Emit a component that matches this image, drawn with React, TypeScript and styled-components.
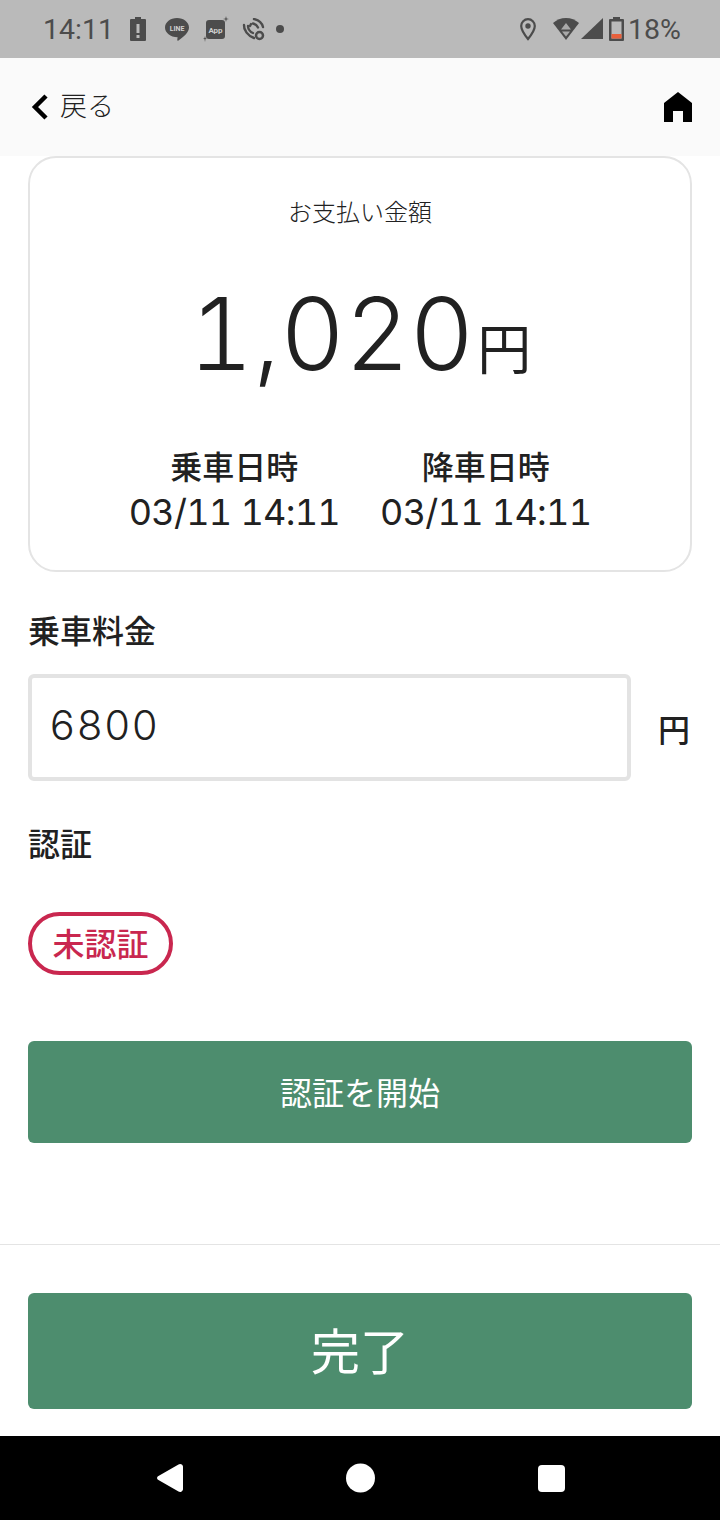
import styled, { createGlobalStyle } from 'styled-components'

const GlobalStyle = createGlobalStyle`
html, body {
    margin: 0;
    padding: 0;
    background: #fff;
}
body {
    font-family: Inter, "Noto Sans CJK JP", sans-serif;
    font-variant-numeric: tabular-nums;
    color: #212121;
}
* {
    box-sizing: border-box;
}
`

const Screen = styled.div`
width: 720px;
height: 1520px;
display: flex;
flex-direction: column;
overflow: hidden;
`

const StatusBar = styled.div`
height: 58px;
flex: none;
background: #bababa;
display: flex;
align-items: center;
justify-content: space-between;
padding: 0 39px 0 43px;
color: #4c4c4c;
font-family: Roboto, sans-serif;
font-size: 28.500px;
`

const StatusGroup = styled.div`
display: flex;
align-items: center;
`

const StatusIcon = styled.svg<{ $left?: number }>`
display: block;
margin-left: ${p => p.$left ?? 0}px;
flex: none;
`

const BatteryText = styled.span`
margin-left: 4px;
`

const Header = styled.header`
height: 98px;
flex: none;
background: #fafafa;
display: flex;
align-items: center;
justify-content: space-between;
padding: 0 28px 0 30px;
`

const BackLink = styled.div`
display: flex;
align-items: center;
gap: 10px;
font-size: 27px;
font-weight: 300;
line-height: 40px;
color: #212121;
`

const Content = styled.main`
flex: 1;
padding: 0 28px;
display: flex;
flex-direction: column;
`

const AmountCard = styled.section`
height: 416px;
border: 2px solid #e4e4e4;
border-radius: 28px;
display: flex;
flex-direction: column;
align-items: center;
`

const CardTitle = styled.div`
margin-top: 37px;
font-size: 24px;
font-weight: 300;
line-height: 36px;
`

const Amount = styled.div`
margin-top: 48px;
height: 110px;
display: flex;
align-items: flex-end;
font-weight: 360;
`

const AmountValue = styled.span`
font-size: 100px;
line-height: 110px;
`

const AmountUnit = styled.span`
font-size: 54px;
font-weight: 400;
line-height: 76px;
margin-left: 3px;
`

const TimeRow = styled.div`
margin-top: 57px;
display: flex;
gap: 40px;
`

const TimeColumn = styled.div`
display: flex;
flex-direction: column;
align-items: center;
`

const TimeLabel = styled.div`
font-size: 32px;
line-height: 44px;
font-weight: 500;
`

const TimeValue = styled.div`
font-size: 36px;
line-height: 45px;
letter-spacing: -0.700px;
`

const SectionLabel = styled.div<{ $top: number }>`
margin-top: ${p => p.$top}px;
font-size: 32px;
line-height: 44px;
font-weight: 500;
`

const FareRow = styled.div`
margin-top: 20px;
display: flex;
align-items: center;
justify-content: space-between;
`

const FareInput = styled.div`
width: 603px;
height: 107px;
border: 4px solid #e3e3e3;
border-radius: 6px;
padding: 0 0 6px 17px;
display: flex;
align-items: center;
font-size: 41px;
font-weight: 350;
letter-spacing: 1px;
`

const FareUnit = styled.div`
font-size: 32px;
font-weight: 500;
line-height: 44px;
padding-top: 6px;
margin-right: 2px;
`

const StatusPill = styled.div`
margin-top: 45px;
width: 145px;
height: 63px;
border: 4px solid #c9274f;
border-radius: 32px;
padding-bottom: 3px;
display: flex;
align-items: center;
justify-content: center;
font-size: 32px;
font-weight: 500;
color: #c9274f;
`

const GreenButton = styled.button<{ $height: number; $size: number; $lift: number }>`
display: block;
width: 100%;
height: ${p => p.$height}px;
border: 0;
border-radius: 6px;
background: #4d8d6e;
color: #fff;
font-family: inherit;
font-size: ${p => p.$size}px;
padding: 0 0 ${p => p.$lift}px;
`

const StartSection = styled.div`
margin-top: 66px;
`

const Footer = styled.footer`
margin-top: auto;
height: 192px;
border-top: 1px solid #e4e4e4;
margin-left: -28px;
margin-right: -28px;
padding: 48px 28px 0;
`

const NavBar = styled.nav`
height: 84px;
flex: none;
background: #000;
display: flex;
align-items: center;
justify-content: center;
gap: 163px;
`

const App = () => {
    return (
        <Screen>
            <GlobalStyle />
            <StatusBar>
                <StatusGroup>
                    <span>14:11</span>
                    <StatusIcon $left={16} width="16" height="24" viewBox="0 0 16 24">
                        <path d="M5 0h6v2h4a1 1 0 0 1 1 1v20a1 1 0 0 1-1 1H1a1 1 0 0 1-1-1V3a1 1 0 0 1 1-1h4z" fill="#4c4c4c" />
                        <rect x="6.500" y="7" width="3" height="9" fill="#bababa" />
                        <rect x="6.500" y="18" width="3" height="3" fill="#bababa" />
                    </StatusIcon>
                    <StatusIcon $left={19} width="24" height="23" viewBox="0 0 24 23">
                        <path d="M12 0C18.600 0 24 4.200 24 9.500c0 4.800-5.300 9.300-10.500 12.900-1 .6-1.400.3-1.200-.8l.3-2.300C5.300 19.100 0 14.800 0 9.500 0 4.200 5.400 0 12 0z" fill="#4c4c4c" />
                        <text x="12" y="12.500" textAnchor="middle" fontSize="7" fontWeight="700" fill="#d0d0d0" fontFamily="Roboto, sans-serif">LINE</text>
                    </StatusIcon>
                    <StatusIcon $left={14} width="26" height="26" viewBox="0 0 26 26">
                        <rect x="3" y="4" width="19" height="19" rx="3" fill="#4c4c4c" />
                        <text x="12.500" y="16.500" textAnchor="middle" fontSize="8" fontWeight="700" fill="#d0d0d0" fontFamily="Roboto, sans-serif">App</text>
                        <path d="M23 0l.6 2.400 2.400.6-2.400.6L23 6l-.6-2.400L20 3l2.400-.6zM2 20l.5 2 1.500.5-1.500.5L2 26l-.5-3L0 22.500l1.500-.5z" fill="#4c4c4c" />
                    </StatusIcon>
                    <StatusIcon $left={13} width="23" height="23" viewBox="0 0 23 23">
                        <g fill="none" stroke="#4c4c4c" strokeWidth="2.400" strokeLinecap="round">
                            <path d="M12 1c4.500 1 8 4 9 8" />
                            <path d="M11 5.500c2.500.5 4 2 5 4" />
                            <path d="M2 7c-.5 5 4 11 10 13" />
                            <path d="M6 8c0 3 2.500 6 5 7" />
                            <path d="M9 6l-1 2" />
                        </g>
                        <circle cx="17.500" cy="17.500" r="3.500" fill="none" stroke="#4c4c4c" strokeWidth="2.500" />
                    </StatusIcon>
                    <StatusIcon $left={11} width="8" height="8" viewBox="0 0 8 8">
                        <circle cx="4" cy="4" r="4" fill="#4c4c4c" />
                    </StatusIcon>
                </StatusGroup>
                <StatusGroup>
                    <StatusIcon width="16" height="23" viewBox="0 0 16 23">
                        <path d="M8 1.200c3.800 0 6.800 3 6.800 6.800 0 4.400-4.200 9.800-6.800 13C5.400 17.800 1.200 12.400 1.200 8 1.200 4.200 4.200 1.200 8 1.200z" fill="none" stroke="#4c4c4c" strokeWidth="2.200" />
                        <circle cx="8" cy="8" r="2.700" fill="#4c4c4c" />
                    </StatusIcon>
                    <StatusIcon $left={17} width="26" height="22" viewBox="0 0 26 22">
                        <path d="M13 0c5 0 9.500 1.900 13 5L13 22 0 5C3.500 1.900 8 0 13 0z" fill="#4c4c4c" />
                        <path d="M13 5l5 6.500H8zM9 13.500h8L13 18.500z" fill="#a9a9a9" />
                    </StatusIcon>
                    <StatusIcon $left={2} width="22" height="22" viewBox="0 0 22 22">
                        <path d="M22 0v21H0z" fill="#4c4c4c" />
                    </StatusIcon>
                    <StatusIcon $left={6} width="15" height="24" viewBox="0 0 15 24">
                        <path d="M4 0h7v2h3a1 1 0 0 1 1 1v20a1 1 0 0 1-1 1H1a1 1 0 0 1-1-1V3a1 1 0 0 1 1-1h3z" fill="#4c4c4c" />
                        <rect x="2.500" y="4.500" width="10" height="17" fill="#bababa" />
                        <rect x="2.500" y="17" width="10" height="4.500" fill="#e8603c" />
                    </StatusIcon>
                    <BatteryText>18%</BatteryText>
                </StatusGroup>
            </StatusBar>
            <Header>
                <BackLink>
                    <svg width="20" height="26" viewBox="0 0 20 26">
                        <path d="M16 2 5 13l11 11" fill="none" stroke="#000" strokeWidth="4.500" />
                    </svg>
                    <span>戻る</span>
                </BackLink>
                <svg width="28" height="30" viewBox="0 0 28 30">
                    <path d="M14 0 28 11V30H19V19H9V30H0V11z" fill="#000" />
                </svg>
            </Header>
            <Content>
                <AmountCard>
                    <CardTitle>お支払い金額</CardTitle>
                    <Amount>
                        <AmountValue>1,020</AmountValue>
                        <AmountUnit>円</AmountUnit>
                    </Amount>
                    <TimeRow>
                        <TimeColumn>
                            <TimeLabel>乗車日時</TimeLabel>
                            <TimeValue>03/11 14:11</TimeValue>
                        </TimeColumn>
                        <TimeColumn>
                            <TimeLabel>降車日時</TimeLabel>
                            <TimeValue>03/11 14:11</TimeValue>
                        </TimeColumn>
                    </TimeRow>
                </AmountCard>
                <SectionLabel $top={38}>乗車料金</SectionLabel>
                <FareRow>
                    <FareInput>6800</FareInput>
                    <FareUnit>円</FareUnit>
                </FareRow>
                <SectionLabel $top={42}>認証</SectionLabel>
                <StatusPill>未認証</StatusPill>
                <StartSection>
                    <GreenButton $height={102} $size={32} $lift={2}>認証を開始</GreenButton>
                </StartSection>
                <Footer>
                    <GreenButton $height={116} $size={49} $lift={6}>完了</GreenButton>
                </Footer>
            </Content>
            <NavBar>
                <svg width="27" height="30" viewBox="0 0 27 30">
                    <path d="M22.500 1.500 2 13.300a2 2 0 0 0 0 3.400L22.500 28.500a3 3 0 0 0 4.500-2V3.500a3 3 0 0 0-4.500-2z" fill="#fff" />
                </svg>
                <svg width="29" height="30" viewBox="0 0 29 30">
                    <circle cx="14.500" cy="15" r="14.500" fill="#fff" />
                </svg>
                <svg width="27" height="27" viewBox="0 0 27 27">
                    <rect width="27" height="27" rx="4" fill="#fff" />
                </svg>
            </NavBar>
        </Screen>
    )
}

export default App
